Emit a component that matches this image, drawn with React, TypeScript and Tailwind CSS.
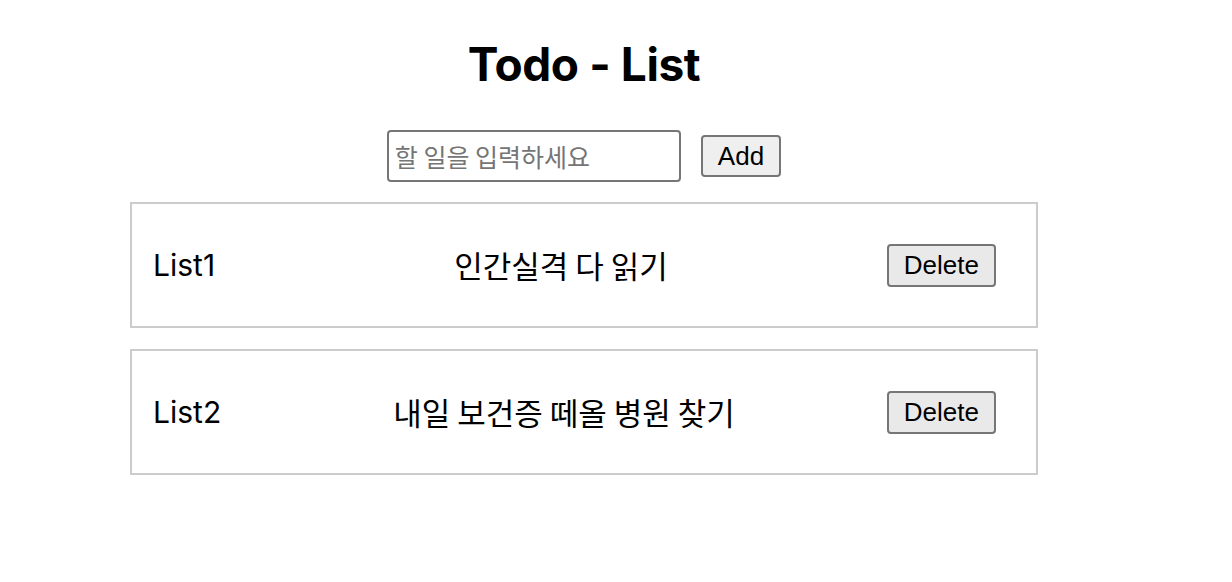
import React from "react";

const items = [
  { id: "List1", text: "인간실격 다 읽기" },
  { id: "List2", text: "내일 보건증 떼올 병원 찾기" },
];

const bodyFont = { fontFamily: 'Inter, "Noto Sans CJK KR", sans-serif' };

export default function App() {
  return (
    <div className="min-h-[582px] w-[1232px] bg-white text-black" style={bodyFont}>
      <div className="ml-[130px] w-[908px] flex flex-col items-center">
        <h1 className="pt-[36px] text-[46px] leading-[56px] font-bold tracking-[-0.4px]">Todo - List</h1>
        <div className="mt-[38px] flex items-center gap-[20px]">
          <input
            type="text"
            placeholder="할 일을 입력하세요"
            className="w-[294px] h-[52px] border-2 border-[#767676] rounded-[4px] px-[6px] text-[25px] placeholder:text-[#757575] outline-none"
            style={{ fontFamily: '"Noto Sans CJK KR", sans-serif' }}
          />
          <button
            className="h-[42px] px-[15px] border-2 border-[#767676] rounded-[4px] bg-[#efefef] text-[26px] leading-none"
            style={{ fontFamily: '"Liberation Sans", Arial, sans-serif' }}
          >
            Add
          </button>
        </div>
        <div className="mt-[20px] w-full flex flex-col gap-[21px]">
          {items.map((it) => (
            <div
              key={it.id}
              className="h-[126px] w-full border-2 border-[#cccccc] flex items-center justify-between pl-[21px] pr-[40px]"
            >
              <span className="text-[30px]">{it.id}</span>
              <span className="ml-[20px] text-[31px]" style={{ fontFamily: '"Noto Sans CJK KR", sans-serif' }}>
                {it.text}
              </span>
              <button
                className="h-[43px] px-[15px] border-2 border-[#767676] rounded-[4px] bg-[#e9e9e9] text-[26px] leading-none"
                style={{ fontFamily: '"Liberation Sans", Arial, sans-serif' }}
              >
                Delete
              </button>
            </div>
          ))}
        </div>
      </div>
    </div>
  );
}
